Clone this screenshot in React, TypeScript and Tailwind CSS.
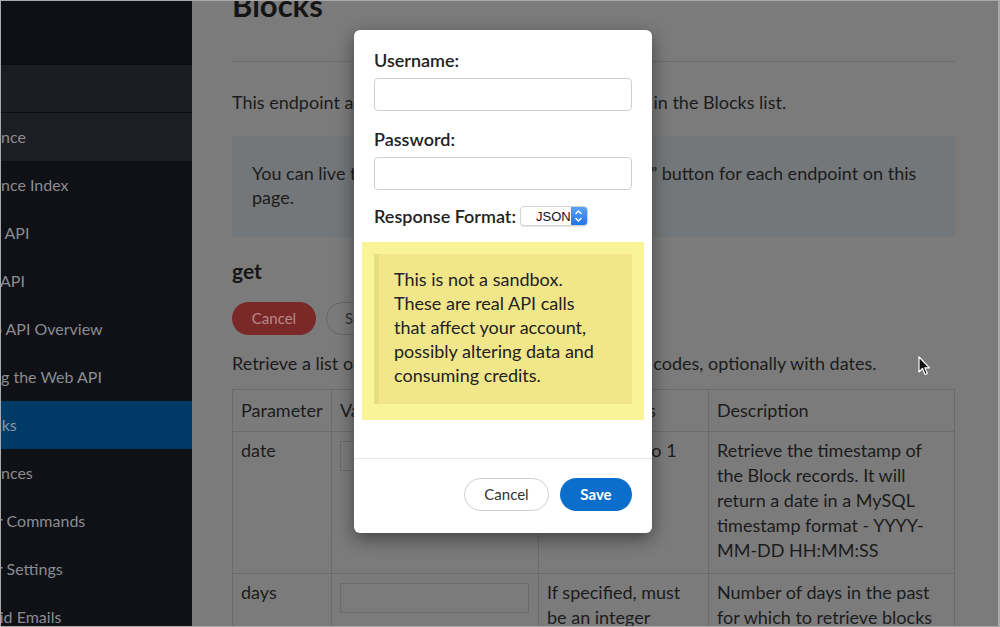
import React from 'react';

const font = { fontFamily: 'Lato, "Open Sans", Arial, sans-serif' };

// visible fragments of the nav (sidebar is cut at the left edge)
const navItems = [
  { label: 'ance', shift: '-ml-[8px]', active: false, parent: true },
  { label: 'ance Index', shift: '-ml-[8px]', active: false, parent: false },
  { label: 'b API', shift: '-ml-[9px]', active: false, parent: false },
  { label: 'API', shift: '-ml-[1px]', active: false, parent: false },
  { label: 'b API Overview', shift: '-ml-[8px]', active: false, parent: false },
  { label: 'g the Web API', shift: 'ml-0', active: false, parent: false },
  { label: 'cks', shift: '-ml-[7px]', active: true, parent: false },
  { label: 'nces', shift: 'ml-0', active: false, parent: false },
  { label: 'r Commands', shift: '-ml-[4px]', active: false, parent: false },
  { label: 'r Settings', shift: '-ml-[4px]', active: false, parent: false },
  { label: 'lid Emails', shift: '-ml-[5px]', active: false, parent: false },
];

const Sidebar = () => (
  <aside className="w-[191px] shrink-0 overflow-hidden bg-[#0f1117]">
    <div className="h-[64px] bg-[#0d1015] border-b border-[#0a0c10]" />
    <div className="h-[48px] bg-[#1a1d23] border-b border-[#0a0c10]" />
    {navItems.map((item) => (
      <div
        key={item.label}
        className={`h-[48px] flex items-center whitespace-nowrap text-[16px] ${
          item.active ? 'bg-[#003a66] text-[#8d96a0]' : item.parent ? 'bg-[#1b1e25] text-[#8a8c90]' : 'text-[#8a8c90]'
        }`}
      >
        <span className={item.shift}>{item.label}</span>
      </div>
    ))}
  </aside>
);

const Page = () => (
  <main className="flex-1 pl-[40px] pr-[43px] text-[#1b1b1b] text-[18px]">
    <h1 className="text-[31px] font-bold leading-[36px] -mt-[14px] text-[#151515]">Blocks</h1>
    <div className="mt-[38px] border-t border-[#6d6d6d]" />
    <p className="mt-[28px] leading-[24px]">This endpoint allows you to retrieve all the addresses in the Blocks list.</p>
    <div className="mt-[22px] h-[101px] bg-[#747779] px-[20px] pt-[25px] leading-[24px]">
      You can live test the Web API calls using the &ldquo;Try It&rdquo; button for each endpoint on this
      <br />
      page.
    </div>
    <h2 className="mt-[22px] text-[21px] font-bold leading-[24px] text-[#151515]">get</h2>
    <div className="mt-[19px] flex gap-[10px]">
      <button className="h-[33px] w-[84px] rounded-full bg-[#7a2828] text-[15px] text-[#b78a8a]">Cancel</button>
      <button className="h-[33px] w-[84px] rounded-full border border-[#666] text-[15px] text-[#333]">Submit</button>
    </div>
    <p className="mt-[16px] leading-[24px]">Retrieve a list of blocks, with their reasons and status codes, optionally with dates.</p>
    <table className="mt-[14px] w-full border-collapse border border-[#6b6b6b] text-left">
      <thead>
        <tr className="h-[42px]">
          <th className="w-[99px] border border-[#6b6b6b] px-[8px] font-normal">Parameter</th>
          <th className="w-[207px] border border-[#6b6b6b] px-[8px] font-normal">Value</th>
          <th className="w-[170px] border border-[#6b6b6b] px-[8px] font-normal">Requirements</th>
          <th className="border border-[#6b6b6b] px-[8px] font-normal">Description</th>
        </tr>
      </thead>
      <tbody className="leading-[25px] align-top">
        <tr className="h-[142px]">
          <td className="border border-[#6b6b6b] px-[8px] pt-[6px]">date</td>
          <td className="border border-[#6b6b6b] px-[8px] pt-[9px]">
            <div className="h-[30px] w-[189px] border border-[#6b6b6b]" />
          </td>
          <td className="border border-[#6b6b6b] px-[8px] pt-[6px]">Must be set to 1</td>
          <td className="border border-[#6b6b6b] px-[8px] pt-[6px]">
            Retrieve the timestamp of the Block records. It will return a date in a MySQL timestamp format - YYYY-MM-DD HH:MM:SS
          </td>
        </tr>
        <tr>
          <td className="border border-[#6b6b6b] px-[8px] pt-[6px]">days</td>
          <td className="border border-[#6b6b6b] px-[8px] pt-[9px]">
            <div className="h-[30px] w-[189px] border border-[#6b6b6b]" />
          </td>
          <td className="border border-[#6b6b6b] px-[8px] pt-[6px]">If specified, must be an integer</td>
          <td className="border border-[#6b6b6b] px-[8px] pt-[6px]">Number of days in the past for which to retrieve blocks</td>
        </tr>
      </tbody>
    </table>
  </main>
);

const Field = ({ label }: { label: string }) => (
  <div>
    <label className="block text-[18px] font-semibold leading-[24px] text-[#222]">{label}</label>
    <input className="mt-[6px] h-[33px] w-full rounded-[4px] border border-[#cfcfcf] bg-white outline-none" />
  </div>
);

const Modal = () => (
  <div className="absolute left-[353px] top-[29px] w-[298px] h-[503px] rounded-[6px] bg-white shadow-[0_6px_18px_rgba(0,0,0,0.45)] flex flex-col">
    <div className="px-[20px] pt-[18px] flex flex-col gap-[16px]">
      <Field label="Username:" />
      <Field label="Password:" />
    </div>
    <div className="px-[20px] mt-[14px] flex items-center gap-[4px]">
      <span className="text-[18px] font-semibold leading-[24px] text-[#222]">Response Format:</span>
      <div className="flex h-[20px] w-[68px] items-stretch overflow-hidden rounded-[4px] border border-[#d4d4d4] bg-white shadow-[0_1px_1px_rgba(0,0,0,0.1)]">
        <span className="flex-1 pl-[15px] text-[13px] leading-[19px] text-[#111]" style={{ fontFamily: 'Arial, "Liberation Sans", sans-serif' }}>
          JSON
        </span>
        <span className="flex w-[17px] items-center justify-center bg-gradient-to-b from-[#5aa2f7] to-[#1f74e8]">
          <svg width="9" height="14" viewBox="0 0 9 14" fill="none" stroke="white" strokeWidth="1.4">
            <path d="M1.5 5 L4.5 2 L7.5 5" />
            <path d="M1.5 9 L4.5 12 L7.5 9" />
          </svg>
        </span>
      </div>
    </div>
    <div className="mx-[8px] mt-[14px] bg-[#f9f497] px-[12px] pt-[12px] pb-[16px]">
      <div className="border-l-[5px] border-[#e6df80] bg-[#f2e68a] pl-[15px] pt-[13px] pb-[17px] text-[18px] leading-[24px] text-[#222]">
        This is not a sandbox.
        <br />
        These are real API calls
        <br />
        that affect your account,
        <br />
        possibly altering data and
        <br />
        consuming credits.
      </div>
    </div>
    <div className="mt-[38px] border-t border-[#e6e6e6] flex justify-end gap-[11px] px-[20px] pt-[19px]">
      <button className="h-[33px] w-[85px] rounded-full border border-[#cfcfcf] bg-white text-[15px] text-[#333]">Cancel</button>
      <button className="h-[33px] w-[72px] rounded-full bg-[#0b6dcc] text-[15px] font-bold text-white">Save</button>
    </div>
  </div>
);

const Cursor = () => (
  <svg className="absolute left-[917px] top-[355px]" width="14" height="20" viewBox="0 0 14 20">
    <path d="M1 1 L1 16 L4.5 12.5 L7 18.5 L9.3 17.5 L6.8 11.8 L11.5 11.8 Z" fill="#111" stroke="white" strokeWidth="1.2" strokeLinejoin="round" />
  </svg>
);

export default function App() {
  return (
    <div style={font} className="relative h-[627px] w-[1000px] overflow-hidden border border-r-2 border-[#a9a9a9] bg-[#7b7b7b]">
      <div className="flex h-full">
        <Sidebar />
        <Page />
      </div>
      <Modal />
      <Cursor />
    </div>
  );
}
